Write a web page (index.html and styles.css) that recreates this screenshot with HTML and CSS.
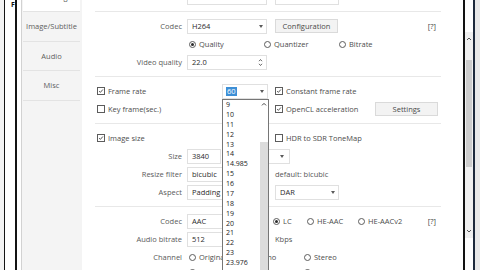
FILE: index.html
```html
<!DOCTYPE html>
<html>
<head>
    <meta charset="utf-8">
    <title>Encode settings</title>
    <link rel="stylesheet" href="styles.css">
</head>
<body>

<!-- window edge on the left -->
<div class="edge">
    <span class="edge-pad"></span>
    <span class="edge-line"></span>
    <span class="edge-gap"><b class="edge-letter">F</b></span>
    <span class="edge-line thick"></span>
    <span class="edge-gap narrow"></span>
    <span class="edge-rule"></span>
</div>

<div class="tabs">
    <div class="tab current">Encoding</div>
    <div class="tab">Image/Subtitle</div>
    <div class="tab">Audio</div>
    <div class="tab">Misc</div>
</div>

<div class="panel">
    <div class="panel-inner">

        <div class="group first">
            <div class="row">
                <span class="label"></span>
                <span class="field combo"></span>
                <span class="field combo mid"></span>
            </div>
        </div>

        <!-- video codec -->
        <div class="group">
            <div class="row">
                <span class="label">Codec</span>
                <span class="field combo">H264</span>
                <span class="extra">
                    <span class="button">Configuration</span>
                    <span class="help">[?]</span>
                </span>
            </div>
            <div class="row">
                <span></span>
                <span class="choices wide">
                    <span class="radio on"><i class="dot"></i>Quality</span>
                    <span class="radio"><i class="dot"></i>Quantizer</span>
                    <span class="radio"><i class="dot"></i>Bitrate</span>
                </span>
            </div>
            <div class="row">
                <span class="label">Video quality</span>
                <span class="field">22.0
                    <svg class="spin" viewBox="0 0 5 9"><path d="M1 3.2L2.5 1.5L4 3.2M1 5.8L2.5 7.5L4 5.8"/></svg>
                </span>
            </div>
        </div>

        <!-- frame rate -->
        <div class="group">
            <div class="row">
                <span class="check"><i class="box on"><svg viewBox="0 0 8 8"><path d="M1.5 4.2L3.2 5.8L6.5 2"/></svg></i>Frame rate</span>
                <span class="field combo small"><span class="picked">60</span></span>
                <span class="extra">
                    <span class="check"><i class="box on"><svg viewBox="0 0 8 8"><path d="M1.5 4.2L3.2 5.8L6.5 2"/></svg></i>Constant frame rate</span>
                </span>
            </div>
            <div class="row">
                <span class="check"><i class="box"></i>Key frame(sec.)</span>
                <span class="field small"></span>
                <span class="extra">
                    <span class="check"><i class="box on"><svg viewBox="0 0 8 8"><path d="M1.5 4.2L3.2 5.8L6.5 2"/></svg></i>OpenCL acceleration</span>
                    <span class="button settings">Settings</span>
                </span>
            </div>
        </div>

        <!-- image size -->
        <div class="group">
            <div class="row">
                <span class="check"><i class="box on"><svg viewBox="0 0 8 8"><path d="M1.5 4.2L3.2 5.8L6.5 2"/></svg></i>Image size</span>
                <span></span>
                <span class="extra">
                    <span class="check"><i class="box"></i>HDR to SDR ToneMap</span>
                </span>
            </div>
            <div class="row">
                <span class="label">Size</span>
                <span class="pair wide">
                    <span class="field tiny">3840</span>
                    <span class="field combo long"></span>
                </span>
            </div>
            <div class="row">
                <span class="label">Resize filter</span>
                <span class="field combo">bicubic</span>
                <span class="extra">default: bicubic</span>
            </div>
            <div class="row">
                <span class="label">Aspect</span>
                <span class="field combo">Padding</span>
                <span class="extra">
                    <span class="field combo mid">DAR</span>
                </span>
            </div>
        </div>

        <!-- audio -->
        <div class="group">
            <div class="row">
                <span class="label">Codec</span>
                <span class="field combo">AAC</span>
                <span class="extra">
                    <span class="radio on lc"><i class="dot"></i>LC</span>
                    <span class="radio he"><i class="dot"></i>HE-AAC</span>
                    <span class="radio"><i class="dot"></i>HE-AACv2</span>
                    <span class="help">[?]</span>
                </span>
            </div>
            <div class="row">
                <span class="label">Audio bitrate</span>
                <span class="field combo">512</span>
                <span class="extra">Kbps</span>
            </div>
            <div class="row tall">
                <span class="label">Channel</span>
                <span class="channels wide">
                    <span class="radio"><i class="dot"></i>Original</span>
                    <span class="radio"><i class="dot"></i>Mono</span>
                    <span class="radio"><i class="dot"></i>Stereo</span>
                    <span class="radio"><i class="dot"></i>4 Ch</span>
                    <span class="radio"><i class="dot"></i>3 Ch</span>
                    <span class="radio"><i class="dot"></i>2.1 Ch</span>
                </span>
            </div>
        </div>

    </div>
</div>

<span class="rule-dark"></span>
<div class="scroll">
    <div class="scroll-track">
        <svg class="scroll-arrow" viewBox="0 0 6 6"><path d="M1 4L3 2L5 4"/></svg>
        <span class="scroll-thumb"></span>
        <span class="scroll-fill"></span>
        <svg class="scroll-arrow" viewBox="0 0 6 6"><path d="M1 2L3 4L5 2"/></svg>
    </div>
</div>
<span class="rule-blue"></span>
<span class="outside"></span>

<!-- open frame rate list -->
<div class="dropdown">
    <ul class="dropdown-list">
        <li>9</li>
        <li>10</li>
        <li>11</li>
        <li>12</li>
        <li>13</li>
        <li>14</li>
        <li>14.985</li>
        <li>15</li>
        <li>16</li>
        <li>17</li>
        <li>18</li>
        <li>19</li>
        <li>20</li>
        <li>21</li>
        <li>22</li>
        <li>23</li>
        <li>23.976</li>
    </ul>
    <div class="dropdown-bar">
        <svg class="dropdown-up" viewBox="0 0 6 6"><path d="M1 4L3 2L5 4"/></svg>
        <span class="dropdown-thumb"></span>
    </div>
</div>

</body>
</html>
```

FILE: styles.css
```css
html, body {
    margin: 0;
    padding: 0;
}

body {
    position: relative;
    display: flex;
    width: 480px;
    height: 270px;
    overflow: hidden;
    background: #ffffff;
    font-family: "Open Sans", "Noto Sans", sans-serif;
    font-size: 7.5px;
    color: #555;
}

/* left window edge */
.edge {
    display: flex;
    flex: none;
    width: 22px;
}

.edge-pad {
    width: 4px;
    background: #f3f3f3;
}

.edge-line {
    width: 1px;
    background: #141414;
}

.edge-line.thick {
    width: 2px;
}

.edge-gap {
    width: 10px;
    background: #ffffff;
}

.edge-gap.narrow {
    width: 4px;
}

.edge-rule {
    width: 1px;
    background: #d2d2d2;
}

.edge-letter {
    display: block;
    padding: 0 0 0 6px;
    font-size: 7px;
    line-height: 9px;
    color: #111;
}

/* side tabs */
.tabs {
    flex: none;
    width: 60px;
    box-sizing: border-box;
    padding: 0 2px 0 1px;
    background: #f4f4f4;
}

.tab {
    display: flex;
    align-items: center;
    justify-content: center;
    height: 28.5px;
    border-bottom: 1px solid #e3e3e3;
    color: #5e5e5e;
}

.tab.current {
    margin-top: -17.5px;
    background: #ffffff;
}

/* settings panel */
.panel {
    flex: none;
    width: 381px;
    overflow: hidden;
}

.panel-inner {
    margin-top: -17px;
}

.group {
    margin: 0 22px 0 13px;
    padding: 5px 0;
    border-top: 1px solid #e8e8e8;
}

.group.first {
    border-top: none;
}

.row {
    display: grid;
    grid-template-columns: 92px 88px 1fr;
    align-items: center;
    height: 18px;
    white-space: nowrap;
}

.row.tall {
    height: auto;
    align-items: start;
}

.row.tall .label {
    line-height: 18px;
}

.label {
    padding-right: 5px;
    text-align: right;
    color: #5a5a5a;
}

.wide {
    grid-column: 2 / 4;
}

.extra {
    display: flex;
    align-items: center;
}

.field {
    position: relative;
    display: flex;
    align-items: center;
    justify-content: space-between;
    box-sizing: border-box;
    width: 80px;
    height: 15px;
    padding: 0 3px 0 4px;
    border: 1px solid #e0e0e0;
    background: #ffffff;
    color: #2b2b2b;
}

.combo::after {
    content: "";
    margin-left: auto;
    border-left: 2.5px solid transparent;
    border-right: 2.5px solid transparent;
    border-top: 3px solid #5a5a5a;
}

.field.small {
    width: 46px;
    margin-left: 35px;
    padding-left: 3px;
}

.field.mid {
    width: 64px;
}

.field.tiny {
    width: 34px;
}

.field.long {
    width: 68px;
    margin-left: 1px;
    padding-right: 5px;
}

.pair {
    display: flex;
}

.spin {
    width: 5px;
    height: 9px;
    fill: none;
    stroke: #555;
    stroke-width: 0.9;
}

.picked {
    padding: 0 1px;
    background: #3d8fd6;
    color: #ffffff;
    line-height: 9px;
}

.button {
    box-sizing: border-box;
    width: 63px;
    height: 14px;
    border: 1px solid #dadada;
    background: #f3f3f3;
    line-height: 12px;
    text-align: center;
    color: #4a4a4a;
}

.button.settings {
    margin: 0 3px 0 auto;
}

.help {
    margin: 0 5px 0 auto;
    color: #444;
}

/* checkboxes and radios */
.check {
    display: flex;
    align-items: center;
    padding-left: 2px;
    color: #4d4d4d;
}

.extra .check {
    padding-left: 0;
}

.box {
    display: block;
    box-sizing: border-box;
    width: 8px;
    height: 8px;
    margin-right: 3px;
    border: 1px solid #5c5c5c;
    background: #ffffff;
}

.box svg {
    display: block;
    width: 6px;
    height: 6px;
    fill: none;
    stroke: #333;
    stroke-width: 1.1;
}

.radio {
    display: flex;
    align-items: center;
    color: #4d4d4d;
}

.dot {
    position: relative;
    box-sizing: border-box;
    width: 7px;
    height: 7px;
    margin-right: 3px;
    border: 1px solid #5c5c5c;
    border-radius: 50%;
}

.radio.on .dot::after {
    content: "";
    position: absolute;
    top: 1px;
    left: 1px;
    width: 3px;
    height: 3px;
    border-radius: 50%;
    background: #2b2b2b;
}

.choices {
    display: flex;
    padding-left: 2px;
}

.choices .radio {
    width: 75px;
}

.radio.lc {
    width: 34px;
    margin-left: -2px;
}

.radio.he {
    width: 51px;
}

.channels {
    display: grid;
    grid-template-columns: 57px 58px 70px;
    grid-auto-rows: 15px;
    align-items: center;
    padding: 1.5px 0 0 2px;
}

/* right edge */
.rule-dark {
    flex: none;
    width: 2px;
    background: #121212;
}

.scroll {
    display: flex;
    flex: none;
    width: 8px;
    padding: 32px 0;
    box-sizing: border-box;
}

.scroll-track {
    display: flex;
    flex-direction: column;
    align-items: center;
    width: 100%;
    background: #f0f0f0;
}

.scroll-arrow {
    flex: none;
    width: 6px;
    height: 14px;
    fill: none;
    stroke: #555;
    stroke-width: 1;
}

.scroll-thumb {
    flex: none;
    width: 6px;
    height: 107px;
    margin-top: 14px;
    background: #cdcdcd;
}

.scroll-fill {
    flex: 1;
}

.rule-blue {
    flex: none;
    width: 2px;
    background: #1e2a3c;
}

.outside {
    flex: 1;
    background: #e9e9e9;
}

/* open list of the frame rate box */
.dropdown {
    position: absolute;
    top: 99px;
    left: 222px;
    display: flex;
    box-sizing: border-box;
    width: 47px;
    height: 180px;
    border: 1px solid #767676;
    background: #ffffff;
}

.dropdown-list {
    flex: 1;
    margin: 0;
    padding: 0 0 0 3px;
    list-style: none;
    font-size: 7px;
    line-height: 9.875px;
    color: #222;
}

.dropdown-bar {
    display: flex;
    flex-direction: column;
    align-items: center;
    width: 9px;
}

.dropdown-up {
    width: 6px;
    height: 9px;
    fill: none;
    stroke: #444;
    stroke-width: 1;
}

.dropdown-thumb {
    width: 8px;
    height: 140px;
    margin-top: 33px;
    background: #dcdcdc;
}
```
